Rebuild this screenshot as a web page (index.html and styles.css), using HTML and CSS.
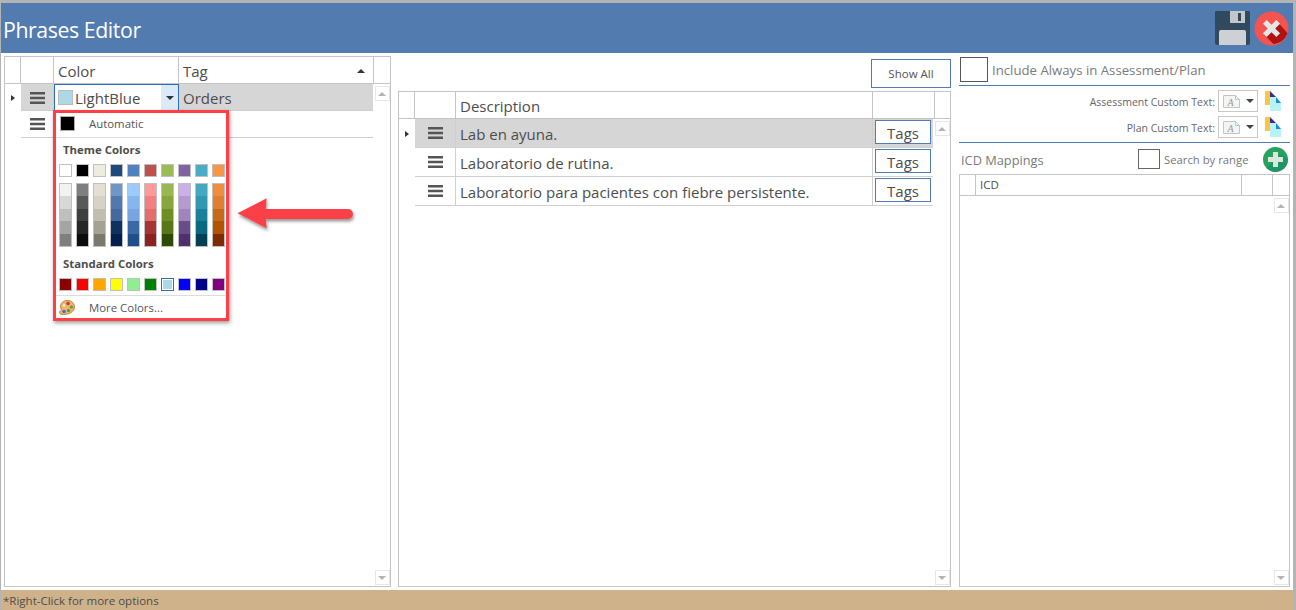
FILE: index.html
```html
<!DOCTYPE html>
<html lang="en">
<head>
<meta charset="utf-8">
<title>Phrases Editor</title>
<link rel="stylesheet" href="styles.css">
</head>
<body>
<div class="window">
  <header class="titlebar">
    <h1 class="title">Phrases Editor</h1>
    <div class="title-actions">
      <svg class="ic-save" width="35" height="34" viewBox="0 0 35 34"><rect width="35" height="34" rx="2" fill="#34495e"/><rect x="0" y="0" width="35" height="15" rx="2" fill="#2f4a5e"/><rect x="15" y="0" width="15" height="12" fill="#c3c7ca"/><rect x="23" y="2" width="3" height="8" fill="#34495e"/><path d="M4 34V21a2 2 0 0 1 2-2h23a2 2 0 0 1 2 2v13z" fill="#cdd1d3"/></svg>
      <svg class="ic-close" width="35" height="35" viewBox="0 0 36 36"><circle cx="18" cy="18" r="17.500" fill="#f4544f"/><path d="M11 25 L20 34 A17.500 17.500 0 0 0 34.500 23 L25 12z" fill="#b01212"/><path d="M18 14.200l5-5 3.800 3.800-5 5 5 5-3.800 3.800-5-5-5 5-3.800-3.800 5-5-5-5 3.800-3.800z" fill="#e6e6e6"/></svg>
    </div>
  </header>

  <main class="content">
    <section class="panel panel-left">
      <div class="dgrid">
        <div class="dhead cols-left">
          <div class="hc"></div><div class="hc"></div><div class="hc">Color</div>
          <div class="hc hc-sort">Tag<span class="sort-tri"></span></div><div class="hc hc-last"></div>
        </div>
        <div class="dbody">
          <div class="indic"><div class="ind-row ind-row-l"><span class="tri-r"></span></div></div>
          <div class="drows">
            <div class="drow rows-left selected">
              <div class="cell cell-c"><svg class="burger" width="15" height="12" viewBox="0 0 15 12"><path d="M0 0h15v2.400H0zM0 4.800h15v2.400H0zM0 9.600h15V12H0z" fill="#555"/></svg></div>
              <div class="cell color-edit"><span class="swatch-lb"></span><span class="color-name">LightBlue</span><span class="dd-btn"><span class="tri-d"></span></span></div>
              <div class="cell cell-txt">Orders</div>
            </div>
            <div class="drow rows-left">
              <div class="cell cell-c"><svg class="burger" width="15" height="12" viewBox="0 0 15 12"><path d="M0 0h15v2.400H0zM0 4.800h15v2.400H0zM0 9.600h15V12H0z" fill="#555"/></svg></div>
              <div class="cell"></div>
              <div class="cell"></div>
            </div>
          </div>
          <div class="scroll"><span class="sb"><span class="tri-u"></span></span><span class="sb"><span class="tri-dn"></span></span></div>
        </div>
      </div>

      <div class="picker">
        <div class="pk-auto"><span class="pk-black"></span><span class="pk-label">Automatic</span></div>
        <div class="pk-head pk-head-theme">Theme Colors</div>
        <div class="pk-row">
          <i class="sw" style="background:#ffffff"></i><i class="sw" style="background:#000000"></i><i class="sw" style="background:#eeece1"></i><i class="sw" style="background:#1f497d"></i><i class="sw" style="background:#4f81bd"></i><i class="sw" style="background:#c0504d"></i><i class="sw" style="background:#9bbb59"></i><i class="sw" style="background:#8064a2"></i><i class="sw" style="background:#4bacc6"></i><i class="sw" style="background:#f79646"></i>
        </div>
        <div class="pk-shades">
          <i class="shade" style="background:linear-gradient(#f2f2f2 20%,#d8d8d8 20% 40%,#bfbfbf 40% 60%,#a5a5a5 60% 80%,#7f7f7f 80%)"></i>
          <i class="shade" style="background:linear-gradient(#7f7f7f 20%,#595959 20% 40%,#3f3f3f 40% 60%,#262626 60% 80%,#0c0c0c 80%)"></i>
          <i class="shade" style="background:linear-gradient(#e3e0d3 20%,#d6d3c6 20% 40%,#c1beb0 40% 60%,#a5a294 60% 80%,#7b796c 80%)"></i>
          <i class="shade" style="background:linear-gradient(#6f96c8 20%,#5179ae 20% 40%,#44699e 40% 60%,#0e325f 60% 80%,#031f4f 80%)"></i>
          <i class="shade" style="background:linear-gradient(#9ecbff 20%,#85b6ee 20% 40%,#78a5df 40% 60%,#3b69a3 60% 80%,#1e4f8b 80%)"></i>
          <i class="shade" style="background:linear-gradient(#ff9a99 20%,#f38080 20% 40%,#e36e6b 40% 60%,#a63634 60% 80%,#8c2220 80%)"></i>
          <i class="shade" style="background:linear-gradient(#9ab754 20%,#87a63e 20% 40%,#6f8e24 40% 60%,#577718 60% 80%,#2f4a02 80%)"></i>
          <i class="shade" style="background:linear-gradient(#ccb0ec 20%,#b49ad0 20% 40%,#a084bf 40% 60%,#6a4c8a 60% 80%,#502f71 80%)"></i>
          <i class="shade" style="background:linear-gradient(#44a8c1 20%,#3298b2 20% 40%,#1c809c 40% 60%,#076a81 60% 80%,#013f52 80%)"></i>
          <i class="shade" style="background:linear-gradient(#ef8e3d 20%,#e27e2f 20% 40%,#c76a18 40% 60%,#b35400 60% 80%,#7f2b00 80%)"></i>
        </div>
        <div class="pk-head pk-head-std">Standard Colors</div>
        <div class="pk-row">
          <i class="sw" style="background:#8b0000"></i><i class="sw" style="background:#ff0000"></i><i class="sw" style="background:#ffa500"></i><i class="sw" style="background:#ffff00"></i><i class="sw" style="background:#90ee90"></i><i class="sw" style="background:#008000"></i><i class="sw sw-sel" style="background:#add8e6"></i><i class="sw" style="background:#0000ff"></i><i class="sw" style="background:#00008b"></i><i class="sw" style="background:#800080"></i>
        </div>
        <div class="pk-more">
          <svg class="palette" width="16" height="15" viewBox="0 0 16 15"><path d="M8.500.500C4 .500 1.500 3.500 1.500 6.500c0 1.500.8 2 .8 3.200 0 1-1.800 1.300-1.800 2.800 0 1.500 2 2 4 2 5 0 11-2.500 11-7.500C15.500 3 12.500.500 8.500.500z" fill="#eeb56a" stroke="#a8702e" stroke-width=".8"/><circle cx="9" cy="3.500" r="1.800" fill="#c93a3a"/><circle cx="12.500" cy="7" r="1.600" fill="#5a9e3a"/><circle cx="9.500" cy="10.500" r="1.600" fill="#3d9a55"/><circle cx="5" cy="11.500" r="1.700" fill="#3f6fd0"/><circle cx="5" cy="5.500" r="1.400" fill="#f7e4c4"/></svg>
          <span class="pk-label">More Colors...</span>
        </div>
      </div>

      <svg class="arrow" width="132" height="50" viewBox="0 0 132 50"><defs><filter id="ash" x="-10%" y="-20%" width="125%" height="150%"><feDropShadow dx="1" dy="2.500" stdDeviation="1.500" flood-color="#000" flood-opacity=".4"/></filter></defs><path d="M2.500 24.300 L31.700 9.300 L30.700 20 L113 20 A5 5 0 0 1 113 30 L30.700 30 L31.700 39.300 Z" fill="#fc4046" filter="url(#ash)"/></svg>
    </section>

    <section class="panel panel-mid">
      <div class="mid-top"><button class="btn-show">Show All</button></div>
      <div class="dgrid">
        <div class="dhead cols-mid">
          <div class="hc"></div><div class="hc"></div><div class="hc">Description</div><div class="hc"></div><div class="hc hc-last"></div>
        </div>
        <div class="dbody">
          <div class="indic"><div class="ind-row ind-row-m"><span class="tri-r"></span></div></div>
          <div class="drows">
            <div class="drow rows-mid selected">
              <div class="cell cell-c"><svg class="burger" width="15" height="12" viewBox="0 0 15 12"><path d="M0 0h15v2.400H0zM0 4.800h15v2.400H0zM0 9.600h15V12H0z" fill="#555"/></svg></div>
              <div class="cell cell-txt cell-desc">Lab en ayuna.</div>
              <div class="cell cell-tag"><span class="btn-tag">Tags</span></div>
            </div>
            <div class="drow rows-mid">
              <div class="cell cell-c"><svg class="burger" width="15" height="12" viewBox="0 0 15 12"><path d="M0 0h15v2.400H0zM0 4.800h15v2.400H0zM0 9.600h15V12H0z" fill="#555"/></svg></div>
              <div class="cell cell-txt cell-desc">Laboratorio de rutina.</div>
              <div class="cell cell-tag"><span class="btn-tag">Tags</span></div>
            </div>
            <div class="drow rows-mid">
              <div class="cell cell-c"><svg class="burger" width="15" height="12" viewBox="0 0 15 12"><path d="M0 0h15v2.400H0zM0 4.800h15v2.400H0zM0 9.600h15V12H0z" fill="#555"/></svg></div>
              <div class="cell cell-txt cell-desc">Laboratorio para pacientes con fiebre persistente.</div>
              <div class="cell cell-tag"><span class="btn-tag">Tags</span></div>
            </div>
          </div>
          <div class="scroll"><span class="sb"><span class="tri-u"></span></span><span class="sb"><span class="tri-dn"></span></span></div>
        </div>
      </div>
    </section>

    <section class="panel panel-right">
      <div class="inc-row"><span class="chk chk-lg"></span><span class="inc-label">Include Always in Assessment/Plan</span></div>
      <div class="custom-block">
        <div class="custom-row"><span class="custom-label">Assessment Custom Text:</span>
          <span class="combo"><svg width="17" height="13" viewBox="0 0 17 13"><path d="M.5.500h12l4 4v8H.5z" fill="#f4f4f4" stroke="#c4c4c4"/><path d="M12.500.500v4h4" fill="none" stroke="#c4c4c4"/><text x="4.500" y="10.500" class="combo-a">A</text></svg><span class="tri-d tri-d-dark"></span></span>
          <svg class="docs" width="16" height="20" viewBox="0 0 16 20"><path d="M0 0h5v14H0z" fill="#fcc63e"/><path d="M5 0l6 6H5z" fill="#3e2e86"/><path d="M5 6h6l5 6v8H5z" fill="#b8f3fb"/><path d="M11 6l5 6h-5z" fill="#1a8fd8"/></svg>
        </div>
        <div class="custom-row"><span class="custom-label">Plan Custom Text:</span>
          <span class="combo"><svg width="17" height="13" viewBox="0 0 17 13"><path d="M.5.500h12l4 4v8H.5z" fill="#f4f4f4" stroke="#c4c4c4"/><path d="M12.500.500v4h4" fill="none" stroke="#c4c4c4"/><text x="4.500" y="10.500" class="combo-a">A</text></svg><span class="tri-d tri-d-dark"></span></span>
          <svg class="docs" width="16" height="20" viewBox="0 0 16 20"><path d="M0 0h5v14H0z" fill="#fcc63e"/><path d="M5 0l6 6H5z" fill="#3e2e86"/><path d="M5 6h6l5 6v8H5z" fill="#b8f3fb"/><path d="M11 6l5 6h-5z" fill="#1a8fd8"/></svg>
        </div>
      </div>
      <div class="icd-bar">
        <span class="icd-title">ICD Mappings</span>
        <span class="chk chk-sm"></span><span class="icd-search">Search by range</span>
        <svg class="ic-plus" width="25" height="25" viewBox="0 0 25 25"><circle cx="12.500" cy="12.500" r="12.500" fill="#27a35f"/><path d="M3.500 21 A12.500 12.500 0 0 0 25 12.500 L18 7z" fill="#1d8a6a" opacity=".55"/><path d="M10 5h5v5h5v5h-5v5h-5v-5H5v-5h5z" fill="#d8e8dc"/></svg>
      </div>
      <div class="dgrid">
        <div class="dhead cols-right">
          <div class="hc"></div><div class="hc hc-icd">ICD</div><div class="hc"></div><div class="hc hc-last"></div>
        </div>
        <div class="dbody">
          <div class="drows"></div>
          <div class="scroll"><span class="sb"><span class="tri-u"></span></span><span class="sb"><span class="tri-dn"></span></span></div>
        </div>
      </div>
    </section>
  </main>

  <footer class="statusbar">*Right-Click for more options</footer>
</div>
</body>
</html>
```

FILE: styles.css
```css
* { box-sizing: border-box; }
html, body { margin: 0; padding: 0; height: 100%; overflow: hidden; }
body { font-family: "Open Sans", "Noto Sans", sans-serif; color: #4d4d4d; background: #fff; }

.window { width: 1296px; height: 610px; display: flex; flex-direction: column; border-top: 3px solid #b4b4b4; border-left: 1px solid #b4b4b4; border-right: 3px solid #b4b4b4; }

.titlebar { height: 50px; flex: none; background: #527baf; display: flex; align-items: center; justify-content: space-between; }
.title { margin: 0 0 0 2px; font-size: 21.300px; letter-spacing: -.42px; font-weight: 400; color: #fff; position: relative; top: 1px; }
.title-actions { display: flex; align-items: flex-start; gap: 4px; padding: 8px 4px 0 0; height: 50px; }

.content { flex: 1; min-height: 0; display: flex; padding: 3px 3px 3px 3px; gap: 7px; }
.panel { display: flex; flex-direction: column; position: relative; }
.panel-left { width: 387px; }
.panel-mid { width: 553px; margin-right: 1px; }
.panel-right { width: 331px; }

.dgrid { flex: 1; min-height: 0; display: flex; flex-direction: column; border: 1px solid #c4c4c4; }
.dhead { display: grid; flex: none; border-bottom: 1px solid #c4c4c4; }
.hc { border-right: 1px solid #c4c4c4; font-size: 15px; color: #4d4d4d; padding-left: 4px; padding-top: 1px; display: flex; align-items: center; }
.hc-last { border-right: 0; }
.hc-sort { justify-content: space-between; padding-right: 8px; }
.sort-tri { width: 0; height: 0; border-left: 4px solid transparent; border-right: 4px solid transparent; border-bottom: 4px solid #333; }

.cols-left { height: 27px; grid-template-columns: 16px 33px 125px 195px 1fr; }
.cols-mid { height: 27px; grid-template-columns: 16px 41px 417px 62px 1fr; }
.cols-right { height: 21px; grid-template-columns: 16px 266px 31px 1fr; }
.hc-icd { font-size: 11.500px; padding-top: 0; padding-bottom: 1px; }

.dbody { flex: 1; min-height: 0; display: flex; }
.indic { width: 16px; flex: none; }
.ind-row { display: flex; align-items: center; justify-content: center; }
.ind-row-l { height: 27px; }
.ind-row-m { height: 29px; }
.tri-r { width: 0; height: 0; border-top: 3.500px solid transparent; border-bottom: 3.500px solid transparent; border-left: 4px solid #333; }
.drows { flex: 1; min-width: 0; }
.drow { display: grid; justify-content: start; border-bottom: 1px solid #d0d0d0; width: max-content; }
.rows-left { height: 27px; grid-template-columns: 33px 125px 194px; }
.rows-mid { height: 29px; grid-template-columns: 41px 417px 60px; }
.drow.selected { background: #d6d6d6; }
.cell { border-right: 1px solid #d0d0d0; display: flex; align-items: center; min-width: 0; font-size: 15px; color: #4d4d4d; }
.cell:last-child { border-right: 0; }
.cell-c { justify-content: center; }
.cell-txt { padding-left: 4px; }
.cell-desc { padding-top: 1px; }
.cell-tag { padding: 0 0 2px 2px; justify-content: flex-start; }

.color-edit { border: 1px solid #2a70b8; background: #fff; padding-left: 3px; height: 27px; }
.swatch-lb { width: 15px; height: 15px; background: #add8e6; border: 1px solid #bcbcbc; flex: none; }
.color-name { margin-left: 2px; flex: 1; }
.dd-btn { width: 17px; align-self: stretch; background: #dce9f7; display: flex; align-items: center; justify-content: center; flex: none; }
.tri-d { width: 0; height: 0; border-left: 4px solid transparent; border-right: 4px solid transparent; border-top: 4px solid #333; }

.scroll { width: 16px; flex: none; display: flex; flex-direction: column; justify-content: space-between; align-items: center; padding: 2px 0 1px; }
.sb { width: 15px; height: 15px; border: 1px solid #e6e6e6; display: flex; align-items: center; justify-content: center; background: #fff; }
.tri-u { width: 0; height: 0; border-left: 4px solid transparent; border-right: 4px solid transparent; border-bottom: 4px solid #b4b4b4; }
.tri-dn { width: 0; height: 0; border-left: 4px solid transparent; border-right: 4px solid transparent; border-top: 4px solid #b4b4b4; }

.picker { position: absolute; left: 49px; top: 54px; width: 176px; height: 211px; background: #fff; border: 3px solid #fc4046; box-shadow: 1px 2px 4px rgba(0,0,0,.4); display: flex; flex-direction: column; }
.pk-auto { height: 25px; flex: none; display: flex; align-items: flex-start; padding: 3px 0 0 4px; border-bottom: 1px solid #dcdcdc; }
.pk-black { width: 15px; height: 15px; background: #000; border: 1px solid #b0b0b0; }
.pk-label { font-size: 11.400px; color: #555; position: absolute; left: 33px; }
.pk-auto .pk-label { top: 3px; }
.pk-head { font-size: 11.400px; font-weight: 700; color: #4d4d4d; height: 26px; display: flex; align-items: center; padding-left: 7px; flex: none; }
.pk-head-theme { padding-bottom: 3px; }
.pk-head-std { height: 31px; padding-top: 2px; }
.pk-row { display: flex; gap: 4px; padding-left: 3px; flex: none; }
.sw { display: block; width: 13px; height: 13px; border: 1px solid #c0c0c0; flex: none; }
.sw-sel { border-color: #2a70b8; box-shadow: inset 0 0 0 1px #fff; }
.pk-shades { display: flex; gap: 4px; padding: 6px 0 0 3px; flex: none; }
.shade { display: block; width: 13px; height: 64px; border: 1px solid #c0c0c0; background-origin: border-box; flex: none; }
.pk-more { margin-top: 4px; border-top: 1px solid #dcdcdc; flex: 1; display: flex; align-items: center; padding-left: 3px; position: relative; }

.arrow { position: absolute; left: 231px; top: 133px; }

.mid-top { height: 35px; flex: none; display: flex; justify-content: flex-end; align-items: flex-start; padding-top: 3px; }
.btn-show { width: 80px; height: 29px; background: #fff; border: 1px solid #527baf; font-family: inherit; font-size: 11.500px; color: #555; padding: 0; }
.btn-tag { width: 56px; height: 24px; border: 1px solid #527baf; background: #fff; display: flex; align-items: center; justify-content: center; font-size: 15px; color: #4d4d4d; padding-top: 2px; }

.inc-row { height: 30px; flex: none; display: flex; align-items: center; padding: 0 0 2px 1px; border-bottom: 1px solid #527baf; }
.chk { display: block; background: #fff; flex: none; }
.chk-lg { width: 28px; height: 25px; border: 1px solid #555; }
.inc-label { margin-left: 4px; font-size: 13.200px; color: #7a7a7a; }
.custom-block { flex: none; height: 57px; border-bottom: 1px solid #527baf; padding-top: 2px; }
.custom-row { height: 26px; display: flex; align-items: center; justify-content: flex-end; padding-right: 9px; }
.custom-label { font-size: 10.500px; color: #666; margin-right: 3px; padding-top: 1px; }
.combo { width: 40px; height: 22px; border: 1px solid #c8c8c8; display: flex; align-items: center; gap: 6px; padding-left: 4px; margin-right: 7px; }
.combo-a { font-family: "Liberation Serif", serif; font-style: italic; font-size: 10px; fill: #999; }
.tri-d-dark { border-top-color: #444; }
.docs { flex: none; }
.icd-bar { flex: none; height: 31px; display: flex; align-items: center; padding-left: 2px; }
.icd-title { font-size: 12.800px; color: #7a7a7a; width: 177px; padding-top: 3px; }
.chk-sm { width: 22px; height: 20px; border: 1px solid #666; }
.icd-search { font-size: 11.300px; color: #777; margin-left: 4px; width: 99px; padding-top: 1px; }
.ic-plus { flex: none; margin-top: 2px; }

.statusbar { height: 20px; flex: none; background: #cfb28a; font-size: 11.500px; color: #4d4d4d; padding: 3px 0 0 2px; line-height: 16px; }
```
